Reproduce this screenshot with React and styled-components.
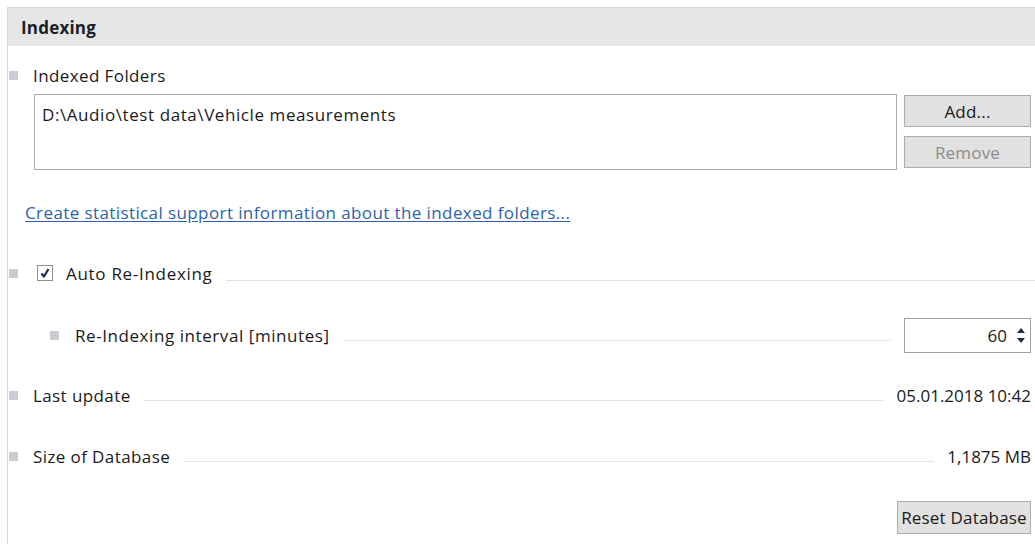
import React from "react";
import styled, { createGlobalStyle } from "styled-components";

const GlobalStyle = createGlobalStyle`
  html, body {
    margin: 0;
    padding: 0;
    background: #ffffff;
  }
  body {
    font-family: "Open Sans", "Noto Sans", "Liberation Sans", sans-serif;
    font-size: 17px;
    letter-spacing: 0.4px;
    color: #1a1a1a;
  }
`;

const Panel = styled.div`
  margin: 7px 0 0 7px;
  border-left: 1px solid #d6d6d6;
  min-height: 537px;
  box-sizing: border-box;
  display: flex;
  flex-direction: column;
`;

const Header = styled.div`
  height: 39px;
  box-sizing: border-box;
  border-top: 1px solid #d9d9d9;
  background: #e6e6e6;
  display: flex;
  align-items: center;
  padding: 1px 0 0 13px;
  font-weight: 700;
  font-size: 17px;
  letter-spacing: 0.2px;
  color: #1b1f2a;
`;

const Content = styled.div`
  padding: 0 4px 0 1px;
  display: flex;
  flex-direction: column;
`;

const Row = styled.div`
  display: flex;
  align-items: center;
  height: ${(p) => p.$h || 24}px;
  margin-top: ${(p) => p.$mt || 0}px;
  padding-left: ${(p) => p.$indent || 0}px;
`;

const Bullet = styled.span`
  width: 9px;
  height: 9px;
  background: #c9cdd3;
  flex: none;
  margin-right: ${(p) => p.$gap || 15}px;
`;

const Label = styled.span`
  white-space: nowrap;
  flex: none;
  letter-spacing: ${(p) => p.$ls || 0.4}px;
`;

const Leader = styled.span`
  flex: 1;
  height: 1px;
  background: #e3e3e3;
  margin: ${(p) => p.$drop || 10}px 13px 0 13px;
  margin-right: ${(p) => (p.$toEdge ? -4 : 13)}px;
`;

const Value = styled.span`
  white-space: nowrap;
  flex: none;
  letter-spacing: 0;
`;

const FolderArea = styled.div`
  display: flex;
  margin-top: 7px;
  padding-left: 25px;
  gap: 7px;
`;

const ListBox = styled.div`
  flex: 1;
  height: 76px;
  box-sizing: border-box;
  border: 1px solid #a8a8a8;
  padding: 8px 7px;
  line-height: 24px;
  letter-spacing: 0.58px;
`;

const ButtonColumn = styled.div`
  display: flex;
  flex-direction: column;
  gap: 9px;
  padding-top: 1px;
`;

const Button = styled.button`
  width: ${(p) => p.$w || 127}px;
  height: ${(p) => p.$h || 32}px;
  box-sizing: border-box;
  border: 1px solid #adadad;
  background: #e1e1e1;
  font-family: inherit;
  font-size: 17px;
  letter-spacing: 0.2px;
  color: ${(p) => (p.disabled ? "#8c8c8c" : "#1a1a1a")};
  padding: 0;
  cursor: default;
`;

const Link = styled.a`
  display: block;
  margin-top: 31px;
  margin-left: 16px;
  height: 24px;
  line-height: 24px;
  color: #2c63a9;
  text-decoration: underline;
  text-underline-offset: 2px;
  white-space: nowrap;
`;

const CheckBox = styled.span`
  width: 16px;
  height: 16px;
  box-sizing: border-box;
  border: 1px solid #8e8e8e;
  background: #fff;
  display: flex;
  align-items: center;
  justify-content: center;
  flex: none;
  margin-right: 13px;
`;

const Spinner = styled.div`
  width: 127px;
  height: 35px;
  box-sizing: border-box;
  border: 1px solid #a0a0a0;
  display: flex;
  align-items: center;
  justify-content: flex-end;
  padding-right: 4px;
  gap: 9px;
  flex: none;
  letter-spacing: 0;
`;

const Arrows = styled.span`
  display: flex;
  flex-direction: column;
  gap: 5px;
`;

const Footer = styled.div`
  display: flex;
  justify-content: flex-end;
  margin-top: 33px;
`;

function Check() {
  return (
    <svg width="12" height="12" viewBox="0 0 12 12">
      <path d="M2.5 6.5 L5 9.5 L9.5 2" fill="none" stroke="#1c2a4d" strokeWidth="2.2" strokeLinejoin="round" />
    </svg>
  );
}

function UpDown() {
  return (
    <Arrows>
      <svg width="10" height="5" viewBox="0 0 10 5">
        <path d="M1 5 L5 0 L9 5 Z" fill="#1f2b45" />
      </svg>
      <svg width="10" height="5" viewBox="0 0 10 5">
        <path d="M1 0 L9 0 L5 5 Z" fill="#1f2b45" />
      </svg>
    </Arrows>
  );
}

export default function App() {
  return (
    <>
      <GlobalStyle />
      <Panel>
        <Header>Indexing</Header>
        <Content>
          <Row $mt={17}>
            <Bullet />
            <Label>Indexed Folders</Label>
          </Row>
          <FolderArea>
            <ListBox>D:\Audio\test data\Vehicle measurements</ListBox>
            <ButtonColumn>
              <Button>Add...</Button>
              <Button disabled>Remove</Button>
            </ButtonColumn>
          </FolderArea>
          <Link>Create statistical support information about the indexed folders...</Link>
          <Row $mt={36}>
            <Bullet $gap={19} />
            <CheckBox>
              <Check />
            </CheckBox>
            <Label $ls={0.7}>Auto Re-Indexing</Label>
            <Leader $drop={14} $toEdge />
          </Row>
          <Row $mt={32} $h={36} $indent={41}>
            <Bullet $gap={16} />
            <Label $ls={0.57}>Re-Indexing interval [minutes]</Label>
            <Leader />
            <Spinner>
              <span>60</span>
              <UpDown />
            </Spinner>
          </Row>
          <Row $mt={30}>
            <Bullet />
            <Label>Last update</Label>
            <Leader />
            <Value>05.01.2018 10:42</Value>
          </Row>
          <Row $mt={37}>
            <Bullet />
            <Label>Size of Database</Label>
            <Leader />
            <Value>1,1875 MB</Value>
          </Row>
          <Footer>
            <Button $w={134} $h={33}>Reset Database</Button>
          </Footer>
        </Content>
      </Panel>
    </>
  );
}
